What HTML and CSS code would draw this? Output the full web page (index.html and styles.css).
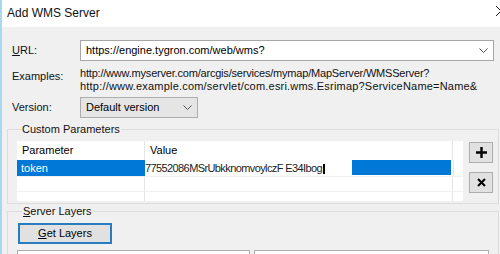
FILE: index.html
```html
<!DOCTYPE html>
<html>
<head>
<meta charset="utf-8">
<link rel="stylesheet" href="styles.css">
</head>
<body>
<div class="window">
  <div class="titlebar">
    <span class="title">Add WMS Server</span>
    <svg class="close" width="8" height="12" viewBox="0 0 8 12"><path d="M1 1 L6 6 L1 11" fill="none" stroke="#222" stroke-width="1"/></svg>
  </div>
  <div class="content">
    <div class="field-row url-row">
      <span class="lbl"><u>U</u>RL:</span>
      <div class="combo url-combo">
        <span>https://engine.tygron.com/web/wms?</span>
        <svg class="chev" width="9" height="5" viewBox="0 0 9 5"><path d="M0.5 0.5 L4.5 4.5 L8.5 0.5" fill="none" stroke="#555" stroke-width="1"/></svg>
      </div>
    </div>
    <div class="field-row ex-row">
      <span class="lbl ex-lbl">Examples:</span>
      <div class="examples">
        <div class="ex1">http://www.myserver.com/arcgis/services/mymap/MapServer/WMSServer?</div>
        <div class="ex2">http://www.example.com/servlet/com.esri.wms.Esrimap?ServiceName=Name&amp;</div>
      </div>
    </div>
    <div class="field-row ver-row">
      <span class="lbl">Version:</span>
      <div class="combo ver-combo">
        <span>Default version</span>
        <svg class="chev" width="9" height="5" viewBox="0 0 9 5"><path d="M0.5 0.5 L4.5 4.5 L8.5 0.5" fill="none" stroke="#555" stroke-width="1"/></svg>
      </div>
    </div>
    <fieldset class="group params">
      <legend>Custom Parameters</legend>
      <div class="params-body">
        <div class="grid">
          <div class="grow head">
            <div class="c1">Parameter</div>
            <div class="c2">Value</div>
            <div class="c3"></div>
          </div>
          <div class="grow sel">
            <div class="c1 blue">token</div>
            <div class="c2 edit">
              <div class="edit-box"><span class="edit-text">77552086MSrUbkknomvoylczF E34Ibog</span><span class="caret"></span></div>
              <div class="edit-rest"></div>
            </div>
            <div class="c3"></div>
          </div>
          <div class="grow empty">
            <div class="c1"></div>
            <div class="c2"></div>
            <div class="c3"></div>
          </div>
          <div class="grow empty last">
            <div class="c1"></div>
            <div class="c2"></div>
            <div class="c3"></div>
          </div>
        </div>
        <div class="side-btns">
          <button class="sq">
            <svg width="11" height="11" viewBox="0 0 11 11"><path d="M5.5 0 V11 M0 5.5 H11" stroke="#000" stroke-width="2.4"/></svg>
          </button>
          <button class="sq">
            <svg width="9" height="9" viewBox="0 0 9 9"><path d="M1 1 L8 8 M8 1 L1 8" stroke="#000" stroke-width="2"/></svg>
          </button>
        </div>
      </div>
    </fieldset>
    <fieldset class="group layers">
      <legend><u>S</u>erver Layers</legend>
      <button class="get-btn"><u>G</u>et Layers</button>
      <div class="bottom-boxes">
        <div class="bbox b1"></div>
        <div class="bbox b2"></div>
      </div>
    </fieldset>
  </div>
</div>
</body>
</html>
```

FILE: styles.css
```css
* { box-sizing: border-box; }
html, body { margin: 0; padding: 0; }
body {
  width: 500px;
  height: 254px;
  overflow: hidden;
  background: #f0f0f0;
  font-family: "Liberation Sans", Arial, sans-serif;
  font-size: 11px;
  color: #000;
}
.window {
  border-left: 2px solid #a9d8ee;
  height: 254px;
  overflow: hidden;
}
.titlebar {
  height: 27px;
  background: #fff;
  display: flex;
  align-items: center;
  justify-content: space-between;
  padding-left: 5px;
  padding-bottom: 1px;
}
.title { font-size: 12px; line-height: 16px; color: #111; }
.close { margin-right: -3px; margin-top: -4px; }
.content { padding-left: 5px; }
.field-row {
  display: flex;
  align-items: center;
  padding-left: 5px;
  line-height: 15px;
  white-space: nowrap;
}
.lbl { width: 68px; flex: none; color: #111; }
.url-row { margin-top: 13px; }
.combo {
  display: flex;
  align-items: center;
  justify-content: space-between;
  height: 21px;
  border: 1px solid #a6a6a6;
  padding: 0 5px 0 5px;
}
.url-combo { width: 414px; background: #fff; }
.ver-combo { width: 118px; background: #e5e5e5; border-color: #adadad; padding-left: 5px; }
.ex-row { margin-top: 6px; align-items: flex-start; }
.ex-lbl { margin-top: 2px; }
.examples { line-height: 13px; color: #111; }
.ex1 { letter-spacing: -0.2px; }
.ex2 { letter-spacing: 0.2px; }
.ver-row { margin-top: 4px; }

.group {
  margin: 0;
  padding: 0;
  border: 1px solid #dcdcdc;
  min-width: 0;
  width: 492px;
}
.group legend {
  padding: 0 1px;
  margin-left: 4px;
  line-height: 15px;
  color: #111;
}
.params { margin-top: 4px; padding: 4px 0 2px 9px; }
.params-body { display: flex; gap: 6px; align-items: flex-start; }
.grid {
  width: 446px;
  height: 60px;
  background: #fff;
  overflow: hidden;
}
.grow { display: flex; border-bottom: 1px solid #f0f0f0; }
.grow > div { flex: none; }
.c1 { width: 128px; border-right: 1px solid #e5e5e5; padding-left: 4px; }
.c2 { width: 308px; border-right: 1px solid #e5e5e5; }
.c3 { width: 10px; }
.head { height: 19px; line-height: 18px; border-bottom: none; }
.head .c1 { padding-left: 5px; }
.head .c2 { padding-left: 5px; }
.sel { height: 17px; line-height: 16px; }
.sel .c1 { border-right: none; width: 128px; }
.blue { background: #0078d7; color: #fff; }
.edit { display: flex; border-right: none; }
.edit-box {
  width: 207px;
  background: #fff;
  display: flex;
  align-items: center;
  overflow: hidden;
  white-space: nowrap;
}
.edit-text { letter-spacing: -0.6px; color: #222; }
.caret { width: 2px; height: 10px; background: #000; margin-left: 1px; margin-top: 2px; }
.edit-rest { width: 99px; background: #0078d7; height: 15px; }
.sel .c3 { border-left: 1px solid #e5e5e5; }
.empty { height: 15px; }
.side-btns { display: flex; flex-direction: column; gap: 9px; padding-top: 1px; }
.sq {
  width: 24px;
  height: 21px;
  padding: 0;
  margin: 0;
  background: #e1e1e1;
  border: 1px solid #adadad;
  display: flex;
  align-items: center;
  justify-content: center;
}
.layers { padding: 4px 0 0 10px; height: 60px; border-bottom: none; }
.get-btn {
  width: 94px;
  height: 21px;
  margin: 0;
  padding: 0;
  background: #e1e1e1;
  border: 2px solid #2a7cc0;
  font-family: inherit;
  font-size: 11px;
  line-height: 15px;
  color: #000;
}
.bottom-boxes { display: flex; gap: 4px; margin-top: 6px; margin-left: -1px; }
.bbox { height: 10px; border: 1px solid #adadad; background: #fff; }
.b1 { width: 233px; }
.b2 { width: 235px; }
```
